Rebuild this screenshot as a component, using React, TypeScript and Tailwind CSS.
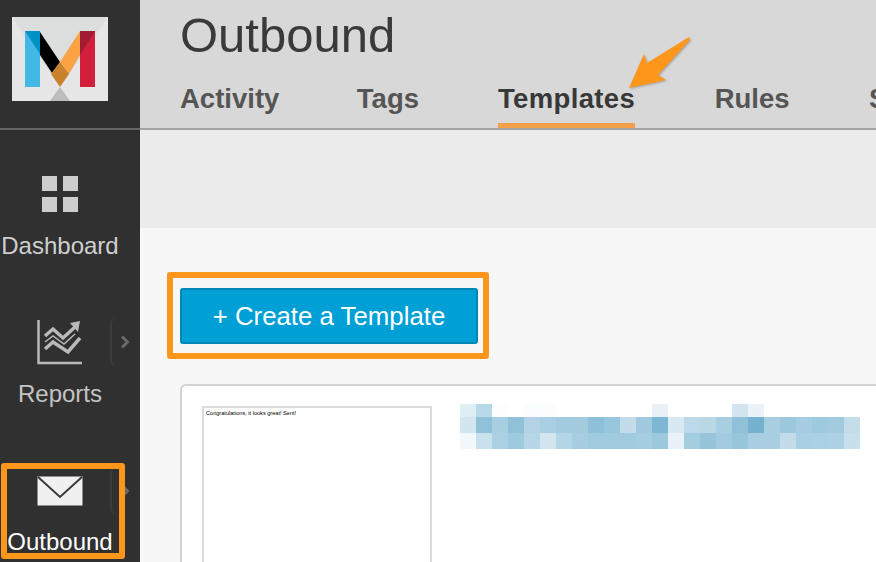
const FONT = "font-['Liberation_Sans','Arial',sans-serif]";

const MOSAIC = [
  ["#dfeef5", "#b8d9e7", "#fbfdfe", "#ffffff", "#fafdfe", "#fbfcfe", "#ffffff", "#ffffff", "#ffffff", "#ffffff", "#ffffff", "#ffffff", "#e8f1f8", "#ffffff", "#ffffff", "#ffffff", "#ffffff", "#d0e5ef", "#e9f2f9", "#ffffff", "#ffffff", "#ffffff", "#ffffff", "#ffffff", "#ffffff"],
  ["#d2e6f0", "#8fc1d9", "#a8cee1", "#90c1d9", "#b3d3e4", "#a8cfe2", "#a2cbdf", "#a3cbde", "#8dc0d9", "#98c6dc", "#c2dde9", "#9fc9de", "#7cb7d3", "#d8e9f2", "#bbd9e8", "#b9d8e6", "#a8cee1", "#90c1d9", "#74b2cf", "#a8cee0", "#9cc8dd", "#a5cce1", "#9ecadf", "#a3cbdf", "#c3dde9"],
  ["#f2f8fc", "#c8e1ec", "#abd0e2", "#9ecadf", "#b6d6e7", "#d3e6f0", "#b2d6e5", "#a6cde1", "#a0cbdf", "#a0cbdf", "#a0cbde", "#a5cde0", "#9cc8dc", "#e9f2f9", "#a5cde0", "#96c4da", "#a3cbdf", "#97c5db", "#a9cee1", "#a9cee1", "#c2dde9", "#a9cfe3", "#a9d0e3", "#acd0e4", "#c8e0ec"],
];

function Logo() {
  return (
    <svg viewBox="0 0 96 84" className="h-[84px] w-[96px]">
      <rect width="96" height="84" fill="#e6e6e6" />
      <polygon points="0,0 96,0 48,70" fill="#dcdedd" />
      <polygon points="38,84 58,84 48,70" fill="#bcbcbc" />
      <rect x="13" y="14" width="15" height="56" fill="#42b8e6" />
      <polygon points="13,14 28,14 28,37" fill="#0091c7" />
      <polygon points="28,15 48,45 40,56 28,38" fill="#000000" />
      <rect x="68" y="14" width="15" height="56" fill="#d21f3c" />
      <polygon points="68,14 83,14 68,38" fill="#a11c32" />
      <polygon points="68,14 68,38 57,57 48,45" fill="#fba344" />
      <polygon points="48,45 57,57 48,70 39,57" fill="#c9812c" />
    </svg>
  );
}

function DashboardIcon() {
  return (
    <svg viewBox="0 0 36 36" className="h-9 w-9" fill="#cdcdcd">
      <rect x="0" y="0" width="15" height="15" />
      <rect x="21" y="0" width="15" height="15" />
      <rect x="0" y="21" width="15" height="15" />
      <rect x="21" y="21" width="15" height="15" />
    </svg>
  );
}

function ReportsIcon() {
  return (
    <svg viewBox="0 0 46 46" className="h-[46px] w-[46px]" fill="none" stroke="#b9b9b9">
      <path d="M1.5 0V43H45" strokeWidth="2.5" />
      <path d="M8 16L16 9L26 18L38 7" strokeWidth="3.5" />
      <polygon points="33,3 43,1 41,12" fill="#b9b9b9" stroke="none" />
      <path d="M8 29L16 22L31 32L43 18" strokeWidth="3.5" />
      <path d="M8 22L16 16L27 24L38 14" strokeWidth="1.5" />
    </svg>
  );
}

function MailIcon() {
  return (
    <svg viewBox="0 0 46 30" className="h-[30px] w-[46px]">
      <rect width="45" height="29" x="0.5" y="0.5" fill="#f0f0f0" />
      <path d="M1 1L23 21L45 1" fill="none" stroke="#3a3a3a" strokeWidth="2" />
    </svg>
  );
}

function Flyout({ className }: { className: string }) {
  return (
    <div className={`flex items-center justify-end rounded-l-md border-l-2 border-[#3c3c3c] ${className}`}>
      <svg viewBox="0 0 10 14" className="h-3.5 w-2.5" fill="none" stroke="#6a6a6a" strokeWidth="3">
        <path d="M2 1.5L7.5 7L2 12.5" />
      </svg>
    </div>
  );
}

function Sidebar() {
  return (
    <aside className="flex w-[140px] shrink-0 flex-col bg-[#303030]">
      <div className="h-[130px] border-b-2 border-[#666666] pl-3 pt-[17px]">
        <Logo />
      </div>
      <div className="flex h-[148px] w-[120px] flex-col items-center pt-[46px]">
        <DashboardIcon />
        <span className="mt-5 text-[24px] leading-7 text-[#cfcfcf]">Dashboard</span>
      </div>
      <div className="relative flex h-[148px] w-[120px] flex-col items-center pt-[42px]">
        <ReportsIcon />
        <span className="mt-3.5 text-[24px] leading-7 text-[#c4c4c4]">Reports</span>
        <Flyout className="absolute left-[110px] top-10 h-12 w-5" />
      </div>
      <div className="relative flex w-[120px] flex-1 flex-col items-center pt-[50px]">
        <MailIcon />
        <span className="mt-[22px] text-[24px] leading-7 text-white">Outbound</span>
        <Flyout className="absolute left-[110px] top-[42px] h-[46px] w-5" />
      </div>
    </aside>
  );
}

function Tabs() {
  return (
    <nav className="mt-5 flex gap-[77.5px] whitespace-nowrap text-[27.5px] font-bold leading-8 text-[#555555]">
      <span>Activity</span>
      <span>Tags</span>
      <span className="relative ml-[1.5px] mr-0.5 tracking-[0.35px] text-[#383838]">
        Templates
        <span className="absolute -bottom-[14px] left-0 right-0 h-1.5 bg-[#f3a148]" />
      </span>
      <span>Rules</span>
      <span className="ml-0.5">Settings</span>
    </nav>
  );
}

function Mosaic() {
  return (
    <svg viewBox="0 0 400 45" className="-mt-0.5 h-[45px] w-[400px] shrink-0" shapeRendering="crispEdges">
      {MOSAIC.map((row, y) =>
        row.map((fill, x) => (
          <rect key={`${x}-${y}`} x={x * 16} y={y === 0 ? 0 : y === 1 ? 13 : 29} width="16" height={y === 0 ? 13 : 16} fill={fill} />
        )),
      )}
    </svg>
  );
}

function TemplateCard() {
  return (
    <div className="ml-10 mt-10 flex h-[200px] w-[760px] gap-7 rounded-t-md border-2 border-[#d2d2d2] bg-white pl-5 pt-5">
      <div className="h-[200px] w-[230px] shrink-0 border-2 border-[#dcdcdc] bg-white pl-0.5 pt-px">
        <p className="whitespace-nowrap text-[5.6px] leading-[9px] text-black">Congratulations, it looks great! Sent!</p>
      </div>
      <Mosaic />
    </div>
  );
}

export default function App() {
  return (
    <div className={`relative flex h-[562px] w-[876px] overflow-hidden bg-[#f7f7f7] ${FONT}`}>
      <Sidebar />
      <main className="min-w-0 flex-1">
        <header className="h-[130px] overflow-hidden border-b-2 border-[#a3a3a3] bg-[#d8d8d8] pl-10 pt-[7px]">
          <h1 className="text-[49px] font-normal leading-[56px] text-[#3a3a3a]">Outbound</h1>
          <Tabs />
        </header>
        <div className="h-[98px] bg-[#ebebeb]" />
        <div className="ml-10 pt-[60px]">
          <button
            type="button"
            className="block h-14 w-[298px] rounded-[3px] border-2 border-[#0086b4] bg-[#00a0d6] text-[25.8px] text-white"
          >
            + Create a Template
          </button>
        </div>
        <TemplateCard />
      </main>

      {/* annotations on top of the screenshot */}
      <div className="absolute left-[167px] top-[272px] h-[87px] w-[322px] rounded-[3px] border-[6px] border-[#ff961c]" />
      <div className="absolute left-px top-[463px] h-[96px] w-[124px] rounded-[3px] border-[6px] border-[#ff961c]" />
      <svg viewBox="0 0 70 60" className="absolute left-[627px] top-[33px] h-[60px] w-[70px] drop-shadow-[1px_1px_1px_rgba(0,0,0,0.25)]">
        <polygon points="2,55 17,21 20,30 62,4 63,7 31,42 39,47" fill="#ff961c" />
      </svg>
    </div>
  );
}
